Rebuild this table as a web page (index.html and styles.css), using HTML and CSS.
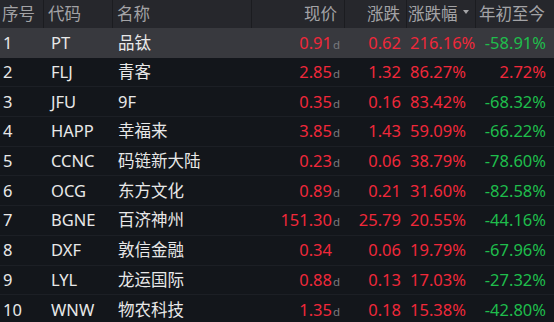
FILE: index.html
```html
<!DOCTYPE html>
<html lang="zh">
<head>
<meta charset="utf-8">
<link rel="stylesheet" href="styles.css">
</head>
<body>
<div class="table">
  <div class="row head">
    <div class="c c1">序号</div>
    <div class="c c2">代码</div>
    <div class="c c3">名称</div>
    <div class="c c4">现价</div>
    <div class="c c5">涨跌</div>
    <div class="c c6">涨跌幅<span class="tri"></span></div>
    <div class="c c7">年初至今</div>
  </div>
  <div class="row sel">
    <div class="c c1">1</div><div class="c c2">PT</div><div class="c c3">品钛</div>
    <div class="c c4 up">0.91<span class="d">d</span></div><div class="c c5 up">0.62</div><div class="c c6 up">216.16%</div><div class="c c7 down">-58.91%</div>
  </div>
  <div class="row">
    <div class="c c1">2</div><div class="c c2">FLJ</div><div class="c c3">青客</div>
    <div class="c c4 up">2.85<span class="d">d</span></div><div class="c c5 up">1.32</div><div class="c c6 up">86.27%</div><div class="c c7 up">2.72%</div>
  </div>
  <div class="row">
    <div class="c c1">3</div><div class="c c2">JFU</div><div class="c c3">9F</div>
    <div class="c c4 up">0.35<span class="d">d</span></div><div class="c c5 up">0.16</div><div class="c c6 up">83.42%</div><div class="c c7 down">-68.32%</div>
  </div>
  <div class="row">
    <div class="c c1">4</div><div class="c c2">HAPP</div><div class="c c3">幸福来</div>
    <div class="c c4 up">3.85<span class="d">d</span></div><div class="c c5 up">1.43</div><div class="c c6 up">59.09%</div><div class="c c7 down">-66.22%</div>
  </div>
  <div class="row">
    <div class="c c1">5</div><div class="c c2">CCNC</div><div class="c c3">码链新大陆</div>
    <div class="c c4 up">0.23<span class="d">d</span></div><div class="c c5 up">0.06</div><div class="c c6 up">38.79%</div><div class="c c7 down">-78.60%</div>
  </div>
  <div class="row">
    <div class="c c1">6</div><div class="c c2">OCG</div><div class="c c3">东方文化</div>
    <div class="c c4 up">0.89<span class="d">d</span></div><div class="c c5 up">0.21</div><div class="c c6 up">31.60%</div><div class="c c7 down">-82.58%</div>
  </div>
  <div class="row">
    <div class="c c1">7</div><div class="c c2">BGNE</div><div class="c c3">百济神州</div>
    <div class="c c4 up">151.30<span class="d">d</span></div><div class="c c5 up">25.79</div><div class="c c6 up">20.55%</div><div class="c c7 down">-44.16%</div>
  </div>
  <div class="row">
    <div class="c c1">8</div><div class="c c2">DXF</div><div class="c c3">敦信金融</div>
    <div class="c c4 up">0.34<span class="d"></span></div><div class="c c5 up">0.06</div><div class="c c6 up">19.79%</div><div class="c c7 down">-67.96%</div>
  </div>
  <div class="row">
    <div class="c c1">9</div><div class="c c2">LYL</div><div class="c c3">龙运国际</div>
    <div class="c c4 up">0.88<span class="d">d</span></div><div class="c c5 up">0.13</div><div class="c c6 up">17.03%</div><div class="c c7 down">-27.32%</div>
  </div>
  <div class="row">
    <div class="c c1">10</div><div class="c c2">WNW</div><div class="c c3">物农科技</div>
    <div class="c c4 up">1.35<span class="d">d</span></div><div class="c c5 up">0.18</div><div class="c c6 up">15.38%</div><div class="c c7 down">-42.80%</div>
  </div>
</div>
</body>
</html>
```
FILE: styles.css
```css
html, body {
  margin: 0;
  padding: 0;
  background: #13161b;
  width: 554px;
  height: 322px;
  overflow: hidden;
}
.table {
  font-family: "Noto Sans", "Noto Sans CJK SC", sans-serif;
  font-size: 16.5px;
  color: #e8e8e8;
}
.row {
  display: grid;
  grid-template-columns: 44px 69px 139px 93px 62px 69px 78px;
  height: 29.7px;
  align-items: center;
  box-sizing: border-box;
  border-bottom: 1px solid #1c1f25;
}
.row.head {
  height: 28px;
  background: #26272c;
  color: #a3a3a6;
  border-bottom: none;
}
.row.sel {
  background: #38393e;
  border-bottom: none;
}
.c {
  white-space: nowrap;
  overflow: hidden;
  line-height: 28px;
  height: 100%;
  display: flex;
  align-items: center;
  box-sizing: border-box;
}
.head .c {
  border-right: 1px solid #1b1c20;
}
.head .c7 { border-right: none; }
.c1 { padding-left: 3px; }
.c2 { padding-left: 7px; }
.c3 { padding-left: 5px; }
.c4 { justify-content: flex-end; padding-right: 4px; }
.c5 { justify-content: flex-end; padding-right: 6px; }
.c6 { padding-left: 3px; }
.c7 { justify-content: flex-end; padding-right: 8px; }
.head .c1 { padding-left: 2px; }
.head .c2 { padding-left: 4px; }
.head .c3 { padding-left: 4px; }
.head .c4 { padding-right: 7px; }
.head .c6 { padding-left: 1px; }
.head .c7 { padding-left: 3px; justify-content: flex-start; }
.up { color: #f0283a; }
.down { color: #1fbd4c; }
.d {
  display: inline-block;
  width: 9px;
  font-size: 11.5px;
  color: #7a7a7e;
  padding-top: 4px;
  padding-left: 1px;
  box-sizing: border-box;
}
.tri {
  display: inline-block;
  width: 0;
  height: 0;
  border-left: 3px solid transparent;
  border-right: 3px solid transparent;
  border-top: 4px solid #a3a3a6;
  margin-left: 5px;
  margin-top: -4px;
}
```
